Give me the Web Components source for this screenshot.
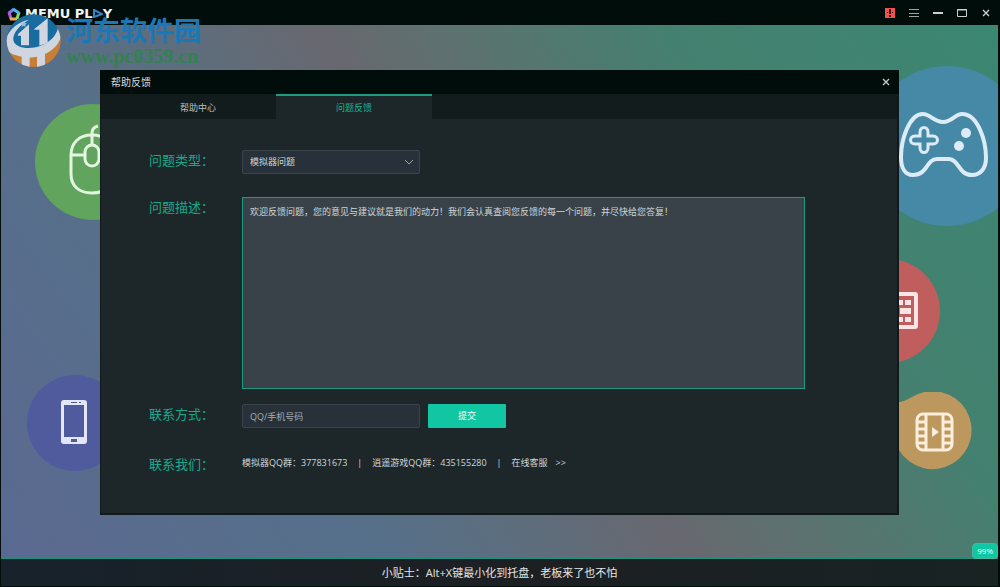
<!DOCTYPE html>
<html lang="zh-CN">
<head>
<meta charset="utf-8">
<title>MEMU PLAY</title>
<style>
  html, body {
    height: 100%;
    margin: 0;
  }
  body {
    background: #010d0b;
    color: #d0d6d6;
    font-family: "Open Sans", "Noto Sans CJK SC", sans-serif;
    font-size: 9px;
    line-height: 12px;
  }
</style>
</head>
<body>
<memu-window>
  <title-bar slot="header"></title-bar>
  <site-mark slot="mark"></site-mark>

  <icon-bubble kind="mouse"></icon-bubble>
  <icon-bubble kind="phone"></icon-bubble>
  <icon-bubble kind="gamepad"></icon-bubble>
  <icon-bubble kind="keyboard"></icon-bubble>
  <icon-bubble kind="film"></icon-bubble>

  <help-dialog>
    <span slot="title">帮助反馈</span>
    <dialog-tab slot="tabs">帮助中心</dialog-tab>
    <dialog-tab slot="tabs" active>问题反馈</dialog-tab>
    <feedback-form></feedback-form>
  </help-dialog>

  <load-badge slot="badge">99%</load-badge>
  <span slot="footer">小贴士：Alt+X键最小化到托盘，老板来了也不怕</span>
</memu-window>

<script>
class BaseElement extends HTMLElement {
  constructor() {
    super()
    this._shadowRoot = this.attachShadow({ mode: 'open' })
    this._shadowRoot.innerHTML = this.template
  }

  get template() {
    return '<slot></slot>'
  }
}

class MemuWindow extends BaseElement {
  get template() {
    return `
      <style>
        :host {
          display: flex;
          flex-direction: column;
          position: relative;
          box-sizing: border-box;
          min-height: 100vh;
          border: solid #010d0b;
          border-width: 0 2px 1px 1px;
          overflow: hidden;
        }
        main {
          flex: 1;
          position: relative;
          overflow: hidden;
          border-bottom: 2px solid #1f8f7c;
          background: linear-gradient(55deg, #5b6990 0%, #56708a 28%, #5e6d7c 40%, #68686f 50%, #5c726f 60%, #45806f 75%, #3b8772 100%);
        }
        footer {
          display: flex;
          align-items: center;
          justify-content: center;
          height: 27px;
          background: linear-gradient(90deg, #17222b, #1d1f22 55%, #182322);
          color: #e2e6e6;
          font-size: 11px;
          line-height: 16px;
        }
        .badge {
          position: absolute;
          right: 0;
          bottom: 27px;
        }
      </style>
      <slot name="header"></slot>
      <main><slot></slot></main>
      <footer><slot name="footer"></slot></footer>
      <div class="badge"><slot name="badge"></slot></div>
      <slot name="mark"></slot>
    `
  }
}

class TitleBar extends BaseElement {
  get template() {
    return `
      <style>
        :host {
          display: flex;
          align-items: center;
          justify-content: space-between;
          height: 25px;
          background: #010d0b;
        }
        .brand {
          display: flex;
          align-items: center;
          gap: 3px;
          padding: 2px 0 0 5px;
          color: #f2f5f5;
          font: bold 13px/12px "DejaVu Sans", sans-serif;
        }
        .name {
          display: flex;
          align-items: center;
          white-space: pre;
        }
        nav {
          display: flex;
        }
        button {
          display: flex;
          align-items: center;
          justify-content: center;
          width: 24px;
          height: 24px;
          padding: 0;
          border: 0;
          background: none;
          color: #c9d0ce;
        }
        svg {
          display: block;
        }
      </style>
      <div class="brand">
        <svg width="16" height="16" viewBox="0 0 16 16" fill="none" stroke-width="3">
          <path d="M8 3 3 7" stroke="#6d7df0"/>
          <path d="M3 6l2 7" stroke="#b45fe0"/>
          <path d="M4 13h7" stroke="#f0a64a"/>
          <path d="M11 13l2-7" stroke="#8fd95a"/>
          <path d="M13 7 7 3" stroke="#4fb4ef"/>
        </svg>
        <span class="name">MEMU PL<svg width="10" height="9" viewBox="0 0 10 9" fill="none" stroke="#2f86c9" stroke-width="2"><path d="M1 1l8 4-8 3z"/></svg>Y</span>
      </div>
      <nav>
        <button aria-label="提示"><svg width="10" height="10" viewBox="0 0 10 10"><path fill="#f0524e" d="M0 0h10v10H0z"/><path fill="#3a0a0a" d="M4 1h2v5H4zM4 7h2v2H4zM2 4h1v1H2zM7 4h1v1H7z"/></svg></button>
        <button aria-label="菜单"><svg width="10" height="10" viewBox="0 0 10 10" fill="#9da5a3"><path d="M0 1h10v1H0zM0 5h10v1H0zM0 8h10v1H0z"/></svg></button>
        <button aria-label="最小化"><svg width="10" height="10" viewBox="0 0 10 10" fill="currentColor"><path d="M0 4h10v2H0z"/></svg></button>
        <button aria-label="最大化"><svg width="10" height="10" viewBox="0 0 10 10" fill="none" stroke="currentColor"><path d="M.5 1.5h9v7h-9zM0 2h10"/></svg></button>
        <button aria-label="关闭"><svg width="8" height="8" viewBox="0 0 8 8" fill="none" stroke="currentColor" stroke-width="1.4"><path d="M1 1l6 6M7 1 1 7"/></svg></button>
      </nav>
    `
  }
}

// translucent site mark lying over the top left corner
class SiteMark extends BaseElement {
  get template() {
    return `
      <style>
        :host {
          display: flex;
          gap: 4px;
          position: absolute;
          left: 4px;
          top: 13px;
          pointer-events: none;
        }
        .text {
          display: flex;
          flex-direction: column;
          padding-top: 4px;
          white-space: nowrap;
        }
        .cn {
          color: #1a78b8;
          font: bold 27px/26px "Noto Sans CJK SC", sans-serif;
        }
        .url {
          color: #338150;
          font: bold 20px/26px "Liberation Serif", serif;
        }
      </style>
      <svg width="57" height="55" viewBox="0 0 171 165">
        <defs><clipPath id="disc"><ellipse cx="86" cy="83" rx="81" ry="79"/></clipPath></defs>
        <g clip-path="url(#disc)">
          <path fill="#186c9f" d="M0 0h171v60Q130 120 0 115z"/>
          <path fill="#c67f35" d="M171 40v125H20L14 112Q130 140 171 40z"/>
          <path fill="#cfd6df" d="M0 88C8 52 35 28 72 20 20 50 5 98 58 104 110 110 154 80 160 40L171 62C160 118 94 144 44 130 10 122 0 110 0 88z"/>
          <path fill="#cfd6df" d="M40 62 72 34v63H48V68H38zM88 48 128 16v74l-25 8V50H88zM50 120h24v45H50zM96 120l24-7v50H96z"/>
        </g>
        <path fill="#9fc0d4" d="m56 24 3 6 7 1-5 4 1 7-6-4-6 4 1-7-5-4 7-1z"/>
      </svg>
      <div class="text">
        <span class="cn">河东软件园</span>
        <span class="url">www.pc0359.cn</span>
      </div>
    `
  }
}

const bubbles = {
  mouse: {
    place: 'left: 34px; top: 79px',
    size: [116, 116],
    art: `
      <circle cx="58" cy="58" r="58" fill="#61a45d"/>
      <g fill="none" stroke="#e3f6e0" stroke-width="3">
        <path d="M36 51c0-12 8-20 21-20s22 8 22 20v19c0 12-9 19-22 19s-21-7-21-19zM36 51h14M64 51h15"/>
        <rect x="50" y="41" width="14" height="21" rx="7"/>
        <path d="M57 41V29c0-3 2-6 6-7"/>
      </g>`
  },
  phone: {
    place: 'left: 26px; top: 350px',
    size: [96, 96],
    art: `
      <circle cx="48" cy="48" r="48" fill="#4f5b9d"/>
      <rect x="34" y="25" width="26" height="44" rx="3" fill="#e3e6f6"/>
      <path fill="#4f5b9d" d="M37 30h20v32H37zM44 27h6v1h-6zM52 27h2v1h-2zM44 64h6v3h-6z"/>`
  },
  gamepad: {
    place: 'right: -29px; top: 41px',
    size: [160, 160],
    art: `
      <circle cx="80" cy="80" r="80" fill="#4589a7"/>
      <path fill="none" stroke="#dcebf6" stroke-width="4" stroke-linejoin="round" d="M56 48C63 48 67 56 76 56S88 48 95 48C111 48 119 75 119 92 119 103 113 109 105 109 91 109 92 93 82 93H70C59 93 61 109 46 109 38 109 34 102 34 91 34 74 42 48 56 48z"/>
      <path fill="none" stroke="#dcebf6" stroke-width="3" d="M53 70V66c0-6 8-6 8 0v4h5c6 0 6 8 0 8h-5v4c0 6-8 6-8 0v-4h-5c-6 0-6-8 0-8z"/>
      <circle cx="99" cy="67" r="5" fill="#dcebf6"/>
      <circle cx="92" cy="80" r="5" fill="#dcebf6"/>`
  },
  keyboard: {
    place: 'right: 58px; top: 234px',
    size: [104, 104],
    art: `
      <circle cx="52" cy="52" r="52" fill="#c05e5e"/>
      <rect x="22" y="35" width="58" height="33" rx="1" fill="none" stroke="#fae4e4" stroke-width="4"/>
      <path fill="#fae4e4" d="M27 41h6v5h-6zM35 41h6v5h-6zM43 41h6v5h-6zM51 41h6v5h-6zM60 41h7v5h-7zM69 41h6v5h-6zM27 49h9v6h-9zM39 49h9v6h-9zM51 49h10v6H51zM64 49h11v6H64zM27 58h6v5h-6zM36 58h31v5H36zM69 58h6v5h-6z"/>`
  },
  film: {
    place: 'right: 26px; top: 367px',
    size: [88, 78],
    art: `
      <path fill="#bd985e" d="M0 10C18 12 22 8 28 5A39 39 0 1 1 15 58L0 50z"/>
      <g fill="none" stroke="#fbeedb" stroke-width="3">
        <rect x="33" y="22" width="35" height="36" rx="6"/>
        <path d="M42 22v36M59 22v36M33 30h9M33 37h9M33 44h9M33 51h9M59 30h9M59 37h9M59 44h9M59 51h9"/>
      </g>
      <path fill="#fbeedb" d="m48 35 7 5-7 5z"/>`
  }
}

class IconBubble extends BaseElement {
  get template() {
    const { place, size: [width, height], art } = bubbles[this.getAttribute('kind')]
    return `
      <style>
        :host {
          display: block;
          position: absolute;
          ${place};
        }
        svg {
          display: block;
        }
      </style>
      <svg width="${width}" height="${height}" viewBox="0 0 ${width} ${height}">${art}</svg>
    `
  }
}

class HelpDialog extends BaseElement {
  get template() {
    return `
      <style>
        :host {
          display: block;
          position: absolute;
          left: 99px;
          right: 99px;
          top: 45px;
          box-sizing: border-box;
          border: solid #111a1b;
          border-width: 0 2px 2px 1px;
          background: #1d2729;
        }
        header {
          display: flex;
          align-items: center;
          justify-content: space-between;
          height: 24px;
          margin: 0 -2px 0 -1px;
          padding: 0 8px 0 11px;
          background: #010d0b;
          font-size: 10px;
          color: #d9dede;
        }
        button {
          display: flex;
          padding: 1px;
          border: 0;
          background: none;
          color: #c9d0ce;
        }
        nav {
          display: flex;
          padding-left: 19px;
          background: #131c1d;
        }
      </style>
      <header>
        <slot name="title"></slot>
        <button aria-label="关闭"><svg width="8" height="8" viewBox="0 0 8 8" fill="none" stroke="currentColor" stroke-width="1.3"><path d="M1 1l6 6M7 1 1 7"/></svg></button>
      </header>
      <nav role="tablist"><slot name="tabs"></slot></nav>
      <slot></slot>
    `
  }
}

class DialogTab extends BaseElement {
  get template() {
    return `
      <style>
        :host {
          display: block;
        }
        button {
          width: 156px;
          height: 25px;
          padding: 0;
          border: 0;
          border-top: 2px solid transparent;
          background: none;
          color: #b9c0c0;
          font: inherit;
        }
        :host([active]) button {
          border-top-color: #1a9c83;
          background: #1d2729;
          color: #14b392;
        }
      </style>
      <button role="tab" aria-selected="${this.hasAttribute('active')}"><slot></slot></button>
    `
  }
}

class FeedbackForm extends BaseElement {
  get template() {
    return `
      <style>
        :host {
          display: block;
          padding: 31px 92px 39px 48px;
        }
        form {
          display: flex;
          flex-direction: column;
        }
        .row {
          display: flex;
          align-items: flex-start;
          margin-bottom: 23px;
        }
        .row.message {
          margin-bottom: 15px;
        }
        .row.contact {
          margin-bottom: 26px;
        }
        .row:last-child {
          margin-bottom: 0;
        }
        .name {
          flex: none;
          width: 93px;
          color: #1aa98b;
          font-size: 13px;
          line-height: 20px;
        }
        .select {
          position: relative;
          width: 178px;
        }
        .select svg {
          position: absolute;
          right: 6px;
          top: 9px;
          pointer-events: none;
        }
        select, input, textarea {
          display: block;
          box-sizing: border-box;
          margin: 0;
          border: 1px solid #3a444b;
          border-radius: 2px;
          background: #283139;
          color: #d0d6d6;
          font: inherit;
          outline: 0;
        }
        select, input {
          width: 178px;
          height: 24px;
          padding: 0 7px;
          -webkit-appearance: none;
          appearance: none;
        }
        input::placeholder {
          color: #a5adb0;
          opacity: 1;
        }
        textarea {
          flex: 1;
          min-width: 0;
          height: 192px;
          padding: 8px 7px;
          border-color: #1f9a82;
          border-radius: 0;
          background: #394248;
          resize: none;
        }
        .submit {
          width: 78px;
          height: 24px;
          margin-left: 8px;
          padding: 0;
          border: 0;
          border-radius: 1px;
          background: #10c6a3;
          color: #f2fffc;
          font: inherit;
        }
        .links {
          display: flex;
          gap: 10px;
          line-height: 18px;
          white-space: nowrap;
        }
        a {
          display: flex;
          gap: 8px;
          color: inherit;
          text-decoration: none;
        }
      </style>
      <form>
        <div class="row">
          <label class="name" for="type">问题类型：</label>
          <div class="select">
            <select id="type"><option>模拟器问题</option></select>
            <svg width="10" height="6" viewBox="0 0 10 6" fill="none" stroke="#9aa3a6"><path d="m1 1 4 4 4-4"/></svg>
          </div>
        </div>
        <div class="row message">
          <label class="name" for="message">问题描述：</label>
          <textarea id="message">欢迎反馈问题，您的意见与建议就是我们的动力！我们会认真查阅您反馈的每一个问题，并尽快给您答复！</textarea>
        </div>
        <div class="row contact">
          <label class="name" for="contact">联系方式：</label>
          <input id="contact" type="text" placeholder="QQ/手机号码">
          <button class="submit" type="button">提交</button>
        </div>
        <div class="row">
          <span class="name">联系我们：</span>
          <div class="links">
            <span>模拟器QQ群：377831673</span>
            <span>|</span>
            <span>逍遥游戏QQ群：435155280</span>
            <span>|</span>
            <a href="#service">在线客服 <span>&gt;&gt;</span></a>
          </div>
        </div>
      </form>
    `
  }
}

class LoadBadge extends BaseElement {
  get template() {
    return `
      <style>
        :host {
          display: block;
          padding: 1px 4px;
          border: 1px solid #45b79f;
          border-radius: 4px;
          background: #10c6a3;
          color: #eafff9;
          font-size: 8px;
        }
      </style>
      <slot></slot>
    `
  }
}

window.customElements.define('memu-window', MemuWindow)
window.customElements.define('title-bar', TitleBar)
window.customElements.define('site-mark', SiteMark)
window.customElements.define('icon-bubble', IconBubble)
window.customElements.define('help-dialog', HelpDialog)
window.customElements.define('dialog-tab', DialogTab)
window.customElements.define('feedback-form', FeedbackForm)
window.customElements.define('load-badge', LoadBadge)
</script>
</body>
</html>
